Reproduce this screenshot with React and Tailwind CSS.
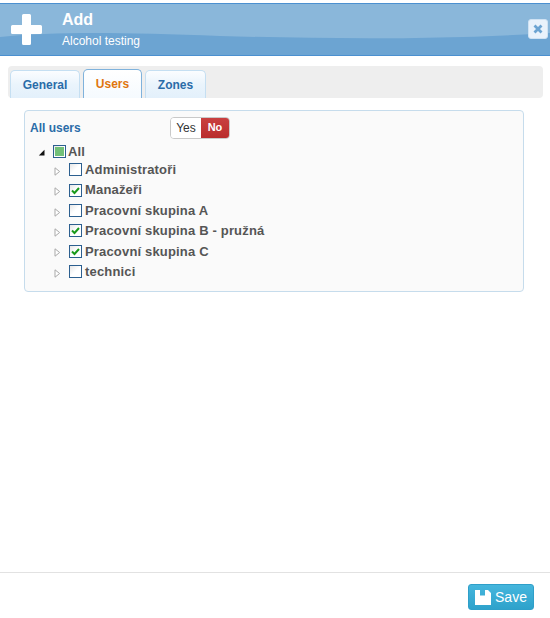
import React from "react";

const font = { fontFamily: '"Liberation Sans", Arial, sans-serif' };

function Check({ state }) {
  return (
    <span className="relative flex h-[13px] w-[13px] shrink-0 items-center justify-center border border-[#2c5f8f] bg-gradient-to-br from-[#e6e6e6] via-[#ffffff] to-[#ffffff]">
      {state === "on" && (
        <svg width="11" height="11" viewBox="0 0 11 11">
          <path d="M2 5.5 L4.5 8 L9 3" fill="none" stroke="#1a9a1a" strokeWidth="2" />
        </svg>
      )}
      {state === "mixed" && <span className="h-[9px] w-[9px] bg-[#72c078]" />}
    </span>
  );
}

function Row({ label, on }) {
  return (
    <div className="flex h-[20.4px] items-center pl-[29px]">
      <svg width="7" height="9" viewBox="0 0 7 9" className="mr-[8px] mt-[3px] shrink-0">
        <path d="M1 .8 L5.6 4.5 L1 8.2 Z" fill="#fff" stroke="#a9a9a9" />
      </svg>
      <Check state={on ? "on" : "off"} />
      <span className="ml-[3px] text-[13px] font-bold tracking-[0.17px] text-[#555555]">{label}</span>
    </div>
  );
}

function Tab({ label, active, width }) {
  return (
    <div
      className={
        (active
          ? "h-[29px] border-[#7fb2dc] from-[#ffffff] to-[#f5fafe] text-[#e0760f]"
          : "h-[28px] border-[#c5dff2] via-[#eaf4fc] from-[#fbfdff] to-[#e3f0fb] text-[#2a6ca8]") +
        " flex items-center justify-center rounded-t-[5px] border border-b-0 bg-gradient-to-b text-[12px] font-bold " +
        width
      }
    >
      {label}
    </div>
  );
}

export default function App() {
  return (
    <div style={font} className="flex h-[618px] w-[550px] flex-col overflow-hidden bg-white pt-[3px]">
      <header className="relative flex h-[53px] shrink-0 items-start border-y border-y-[#4b90d0] bg-[#6ca4d2] pl-[11px] text-white">
        <svg className="absolute inset-0 h-full w-full" viewBox="0 0 550 51" preserveAspectRatio="none">
          <path d="M0 0 H550 V29 C440 36 330 35 220 32 C130 29 60 27 0 33 Z" fill="#8ab7da" />
        </svg>
        <svg width="32" height="32" viewBox="0 0 32 32" className="relative mt-[10px] shrink-0">
          <path d="M11 1.5 Q11 0 12.5 0 H18.5 Q20 0 20 1.5 V11 H29.5 Q31 11 31 12.5 V18.5 Q31 20 29.5 20 H20 V29.5 Q20 31 18.5 31 H12.5 Q11 31 11 29.5 V20 H1.5 Q0 20 0 18.5 V12.5 Q0 11 1.5 11 H11 Z" fill="#fff" />
        </svg>
        <div className="relative ml-[19px] flex flex-col">
          <span className="mt-[6px] text-[16px] font-bold leading-[20px]">Add</span>
          <span className="mt-[4px] text-[12px] leading-[14px]">Alcohol testing</span>
        </div>
        <div className="absolute right-[2px] top-[15px] flex h-[20px] w-[20px] items-center justify-center rounded-[3px] border border-[#cfe2f3] bg-[#e9f2fb]">
          <svg width="10" height="10" viewBox="0 0 10 10">
            <path d="M1.5 1.5 L8.5 8.5 M8.5 1.5 L1.5 8.5" stroke="#6ca4d2" strokeWidth="2.8" />
          </svg>
        </div>
      </header>

      <div className="ml-[8px] mr-[7px] mt-[10px] flex h-[32px] shrink-0 items-end gap-[3px] rounded-[4px] bg-[#eeeeee] px-[2px] pt-[4px]">
        <Tab label="General" width="w-[70px]" />
        <Tab label="Users" active width="w-[59px]" />
        <Tab label="Zones" width="w-[61px]" />
      </div>

      <section className="ml-[24px] mr-[26px] mt-[12px] h-[182px] shrink-0 rounded-[4px] border border-[#c6dcec] bg-[#fafafa]">
        <div className="flex h-[33px] items-center pl-[5px]">
          <span className="w-[140px] text-[12px] font-bold text-[#2a6ca8]">All users</span>
          <div className="flex h-[22px] overflow-hidden rounded-[4px] border border-[#c9c9c9] text-[12px]">
            <span className="flex w-[30px] items-center justify-center bg-white text-[#333333]">Yes</span>
            <span className="flex w-[28px] items-center justify-center bg-gradient-to-b from-[#c94040] to-[#b92c2c] text-[11px] font-bold text-white">No</span>
          </div>
        </div>
        <div className="flex h-[15.6px] items-center pl-[13px]">
          <svg width="7" height="7" viewBox="0 0 7 7" className="mr-[8px] mt-[2px] shrink-0">
            <path d="M6.5 .8 V6.5 H.8 Z" fill="#111" />
          </svg>
          <Check state="mixed" />
          <span className="ml-[2px] text-[13px] font-bold tracking-[0.17px] text-[#555555]">All</span>
        </div>
        <Row label="Administratoři" />
        <Row label="Manažeři" on />
        <Row label="Pracovní skupina A" />
        <Row label="Pracovní skupina B - pružná" on />
        <Row label="Pracovní skupina C" on />
        <Row label="technici" />
      </section>

      <div className="flex-1" />

      <footer className="flex h-[46px] shrink-0 items-start justify-end border-t border-[#e2e2e2] pr-[16px] pt-[11px]">
        <div className="flex h-[26px] w-[66px] items-center justify-center gap-[4px] rounded-[3px] border border-[#2f9fc9] bg-gradient-to-b from-[#45b6dd] to-[#2ea2cb] text-[14px] text-white">
          <svg width="16" height="15" viewBox="0 0 16 15" className="shrink-0">
            <path fillRule="evenodd" d="M0 0 H13 L16 3 V15 H0 Z M5 0 V5.5 H10 V0 Z" fill="#fff" />
          </svg>
          Save
        </div>
      </footer>
    </div>
  );
}
